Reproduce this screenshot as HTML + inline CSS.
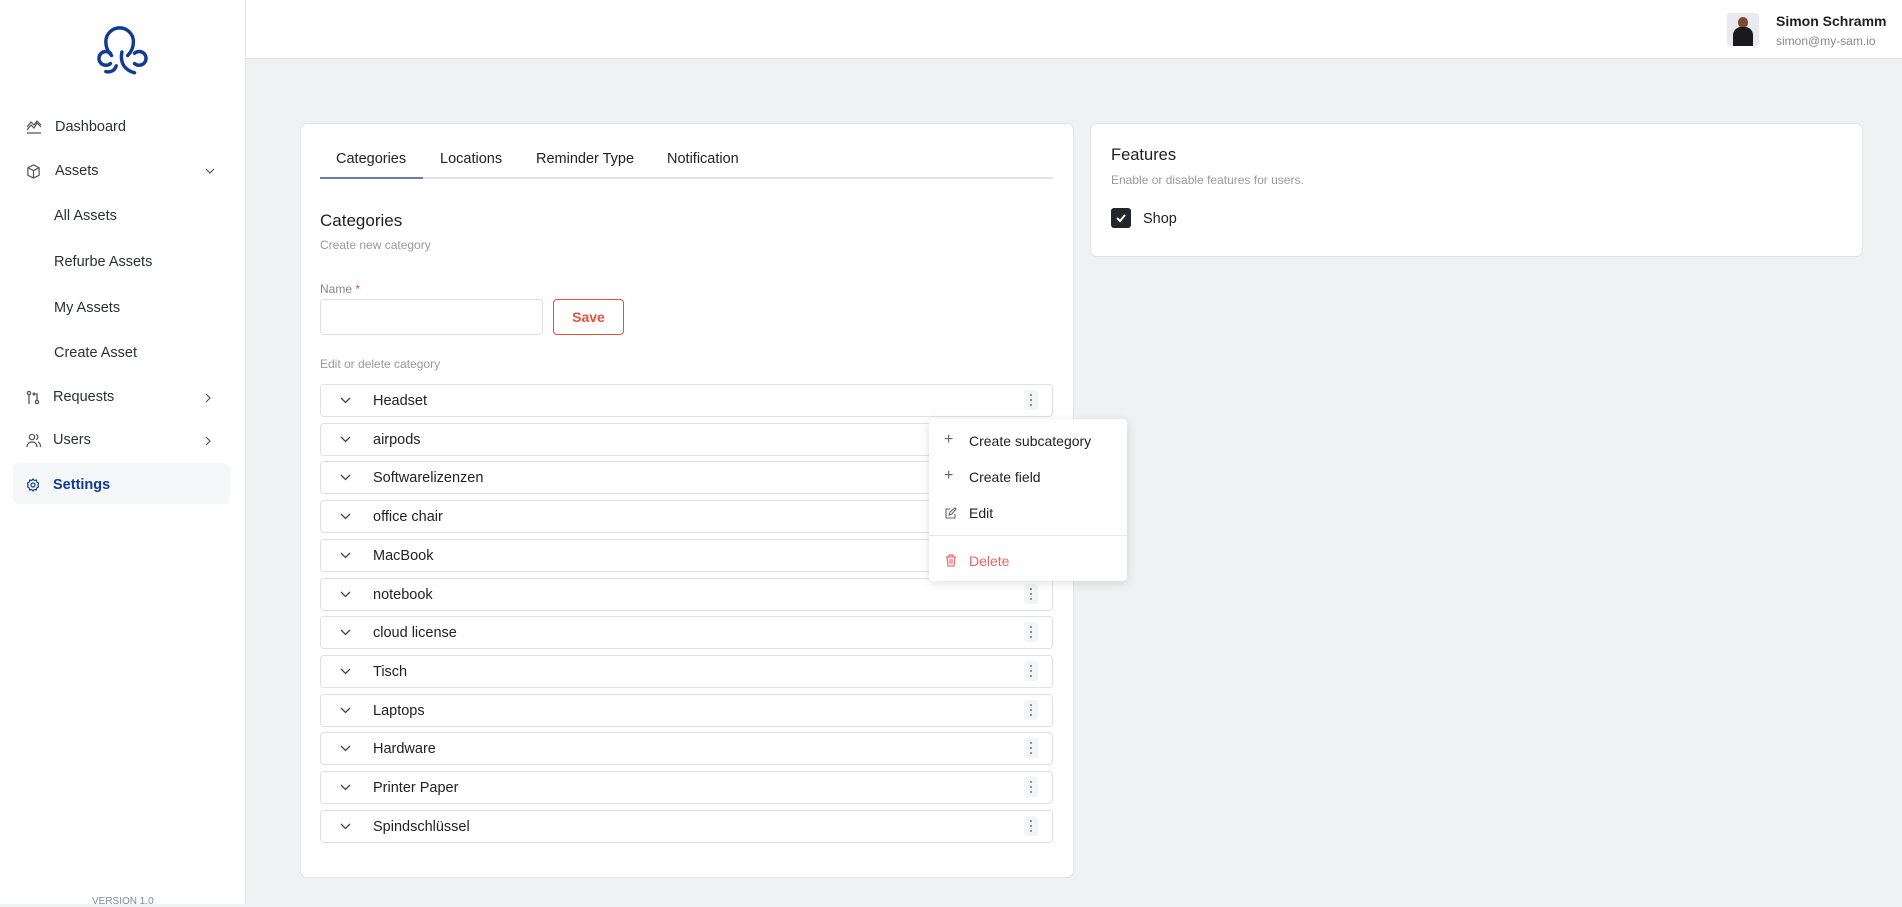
<!DOCTYPE html>
<html><head><meta charset="utf-8"><style>
*{box-sizing:border-box;margin:0;padding:0}
body{width:1902px;height:904px;overflow:hidden;background:#f0f1f3;font-family:"Liberation Sans",sans-serif;color:#1f2937;position:relative}
.sb{position:absolute;left:0;top:0;width:246px;height:904px;background:#fff;border-right:1px solid #e3e4e7}
.hd{position:absolute;left:246px;top:0;right:0;height:59px;background:#fff;border-bottom:1px solid #e1e2e5}
.nav{position:absolute;left:0;font-size:14.5px;color:#2b2f36;display:flex;align-items:center}
.chev{position:absolute;left:205px}
.card{position:absolute;background:#fff;border:1px solid #e2e3e6;border-radius:7px}
.tab{position:absolute;top:151px;font-size:14.5px;color:#222}
.row{position:absolute;left:320px;width:733px;height:33px;border:1px solid #dfe1e4;border-radius:4px;font-size:14.5px;color:#222}
.row span{position:absolute;left:52px;top:8px}
.row svg{position:absolute;left:19px;top:12px}
.keb{position:absolute;right:14px;top:5px;width:14px;height:20px;background:#f3f4f6;border-radius:3px}
.keb i{position:absolute;left:6px;width:2px;height:2px;border-radius:1px;background:#777}
.mi{position:absolute;left:0;font-size:14px;color:#222}
</style></head><body>
<div class="sb">
<svg style="position:absolute;left:85px;top:21px" width="75" height="69" viewBox="90 20 65 60" fill="none" stroke="#0f3b91" stroke-width="3" stroke-linecap="round"><path d="M113 50 C109 46 108 42 108 38 A12 12 0 0 1 132 38 C132 42 131 46 127 50"/><path d="M112 48 A6 6 0 1 0 112 57"/><path d="M133 48 A6 6 0 1 1 133 57"/><path d="M122 47 C120 57 125 63 133 65"/><path d="M108 64 C112 65 116 63 117 59"/></svg>
<div class="nav" style="top:119px;left:55px">Dashboard</div>
<svg style="position:absolute;left:26px;top:120px" width="16" height="14" viewBox="0 0 16 14" fill="none" stroke="#555" stroke-width="1.2"><path d="M1 13h14M1 10l4-5 3 3 3-5 4 4M1 7l4-5 3 3 3-4 4 4"/></svg>
<div class="nav" style="top:163px;left:55px">Assets</div>
<svg style="position:absolute;left:26px;top:164px" width="15" height="15" viewBox="0 0 16 16" fill="none" stroke="#555" stroke-width="1.3"><path d="M8 1l6 3v8l-6 3-6-3V4z M2 4l6 3 6-3 M8 7v8"/></svg>
<svg class="chev" style="top:168px" width="10" height="6" viewBox="0 0 10 6" fill="none" stroke="#555" stroke-width="1.2"><path d="M1 1l4 4 4-4"/></svg>
<div class="nav" style="top:208px;left:54px">All Assets</div>
<div class="nav" style="top:254px;left:54px">Refurbe Assets</div>
<div class="nav" style="top:300px;left:54px">My Assets</div>
<div class="nav" style="top:345px;left:54px">Create Asset</div>
<div class="nav" style="top:389px;left:53px">Requests</div>
<svg style="position:absolute;left:26px;top:390px" width="14" height="15" viewBox="0 0 14 15" fill="none" stroke="#555" stroke-width="1.3"><circle cx="3" cy="3" r="1.6"/><circle cx="11" cy="12" r="1.6"/><path d="M3 5v9M11 10V4H7M8.5 2.5L7 4l1.5 1.5"/></svg>
<svg class="chev" style="top:393px" width="6" height="10" viewBox="0 0 6 10" fill="none" stroke="#555" stroke-width="1.2"><path d="M1 1l4 4-4 4"/></svg>
<div class="nav" style="top:432px;left:53px">Users</div>
<svg style="position:absolute;left:26px;top:433px" width="15" height="15" viewBox="0 0 15 15" fill="none" stroke="#555" stroke-width="1.2"><circle cx="6" cy="4" r="2.7"/><path d="M1 14c0-3 2-5 5-5s5 2 5 5M10 1.5a2.6 2.6 0 010 5M12 9c1.5.6 2.5 2.5 2.5 5"/></svg>
<svg class="chev" style="top:436px" width="6" height="10" viewBox="0 0 6 10" fill="none" stroke="#555" stroke-width="1.2"><path d="M1 1l4 4-4 4"/></svg>
<div style="position:absolute;left:13px;top:463px;width:217px;height:41px;background:#f6f7f9;border-radius:6px"></div>
<div class="nav" style="top:477px;left:53px;color:#0f3b91;font-weight:bold">Settings</div>
<svg style="position:absolute;left:26px;top:478px" width="14" height="14" viewBox="0 0 14 14" fill="none" stroke="#0f3b91" stroke-width="1.2"><circle cx="7" cy="7" r="2"/><path d="M7 1l1.3 1.5 2-.4.5 2 1.7 1L12 7l.5 1.9-1.7 1-.5 2-2-.4L7 13l-1.3-1.5-2 .4-.5-2-1.7-1L2 7l-.5-1.9 1.7-1 .5-2 2 .4z"/></svg>
<div style="position:absolute;left:92px;top:896px;font-size:10px;color:#888">VERSION 1.0</div>
</div>
<div class="hd">
<div style="position:absolute;left:1481px;top:13px;width:32px;height:33px;background:#e8eaf0;border-radius:3px;overflow:hidden"><div style="position:absolute;left:11px;top:4px;width:10px;height:11px;border-radius:5px;background:#7a4a33"></div><div style="position:absolute;left:6px;top:14px;width:20px;height:22px;border-radius:8px 8px 0 0;background:#1a1a1e"></div></div>
<div style="position:absolute;left:1530px;top:13px;font-size:14px;color:#1f1f1f;font-weight:bold">Simon Schramm</div>
<div style="position:absolute;left:1530px;top:34px;font-size:12px;color:#888">simon@my-sam.io</div>
</div>
<div class="card" style="left:300px;top:123px;width:774px;height:755px"></div>
<div class="tab" style="left:336px">Categories</div>
<div class="tab" style="left:440px">Locations</div>
<div class="tab" style="left:536px">Reminder Type</div>
<div class="tab" style="left:667px">Notification</div>
<div style="position:absolute;left:320px;top:177px;width:733px;height:2px;background:#e0e2e6"></div>
<div style="position:absolute;left:320px;top:177px;width:103px;height:2px;background:#6a7ea6"></div>
<div style="position:absolute;left:320px;top:211px;font-size:17px;color:#1f1f1f">Categories</div>
<div style="position:absolute;left:320px;top:238px;font-size:12px;color:#999">Create new category</div>
<div style="position:absolute;left:320px;top:282px;font-size:12px;color:#888">Name <span style="color:#e0533b">*</span></div>
<div style="position:absolute;left:320px;top:299px;width:223px;height:36px;border:1px solid #dfe1e4;border-radius:4px"></div>
<div style="position:absolute;left:553px;top:299px;width:71px;height:36px;border:1px solid #e0533b;border-radius:4px;color:#e0533b;font-weight:bold;font-size:14px;text-align:center;line-height:34px">Save</div>
<div style="position:absolute;left:320px;top:357px;font-size:12px;color:#999">Edit or delete category</div>
<div id="rows"></div>
<script>
var n=["Headset","airpods","Softwarelizenzen","office chair","MacBook","notebook","cloud license","Tisch","Laptops","Hardware","Printer Paper","Spindschlüssel"],h="";
n.forEach(function(t,i){h+='<div class="row" style="top:'+(384+i*38.7).toFixed(1)+'px"><svg width="11" height="7" viewBox="0 0 11 7" fill="none" stroke="#444" stroke-width="1.3"><path d="M1 1l4.5 4.5L10 1"/></svg><span>'+t+'</span><div class="keb"><i style="top:4px"></i><i style="top:9px"></i><i style="top:14px"></i></div></div>'});
document.getElementById("rows").innerHTML=h;
</script>
<div style="position:absolute;left:929px;top:419px;width:198px;height:162px;background:#fff;border-radius:4px;box-shadow:0 2px 10px rgba(0,0,0,.13)">
<div class="mi" style="left:15px;top:12px;color:#666;font-size:16px">+</div><div class="mi" style="left:40px;top:14px">Create subcategory</div>
<div class="mi" style="left:15px;top:48px;color:#666;font-size:16px">+</div><div class="mi" style="left:40px;top:50px">Create field</div>
<svg style="position:absolute;left:16px;top:88px" width="12" height="12" viewBox="0 0 12 12" fill="none" stroke="#666" stroke-width="1.1"><path d="M5 2H1v9h9V7M4 8l1-3 5-4 1 1-4 5z"/></svg><div class="mi" style="left:40px;top:86px">Edit</div>
<div style="position:absolute;left:0;right:0;top:116px;height:1px;background:#e6e7ea"></div>
<svg style="position:absolute;left:16px;top:135px" width="12" height="13" viewBox="0 0 12 13" fill="none" stroke="#f06b6b" stroke-width="1.2"><path d="M1 3h10M4 3V1h4v2M2 3l1 9h6l1-9M5 5v5M7 5v5"/></svg><div class="mi" style="left:40px;top:134px;color:#f06262">Delete</div>
</div>
<div class="card" style="left:1090px;top:123px;width:773px;height:134px"></div>
<div style="position:absolute;left:1111px;top:146px;font-size:16.5px;color:#1f1f1f">Features</div>
<div style="position:absolute;left:1111px;top:173px;font-size:12px;color:#999">Enable or disable features for users.</div>
<div style="position:absolute;left:1111px;top:208px;width:20px;height:20px;background:#24262b;border-radius:3px"><svg width="20" height="20" viewBox="0 0 20 20" fill="none" stroke="#fff" stroke-width="2"><path d="M6 10l3 3 5-6"/></svg></div>
<div style="position:absolute;left:1143px;top:211px;font-size:14.5px;color:#222">Shop</div>
</body></html>
